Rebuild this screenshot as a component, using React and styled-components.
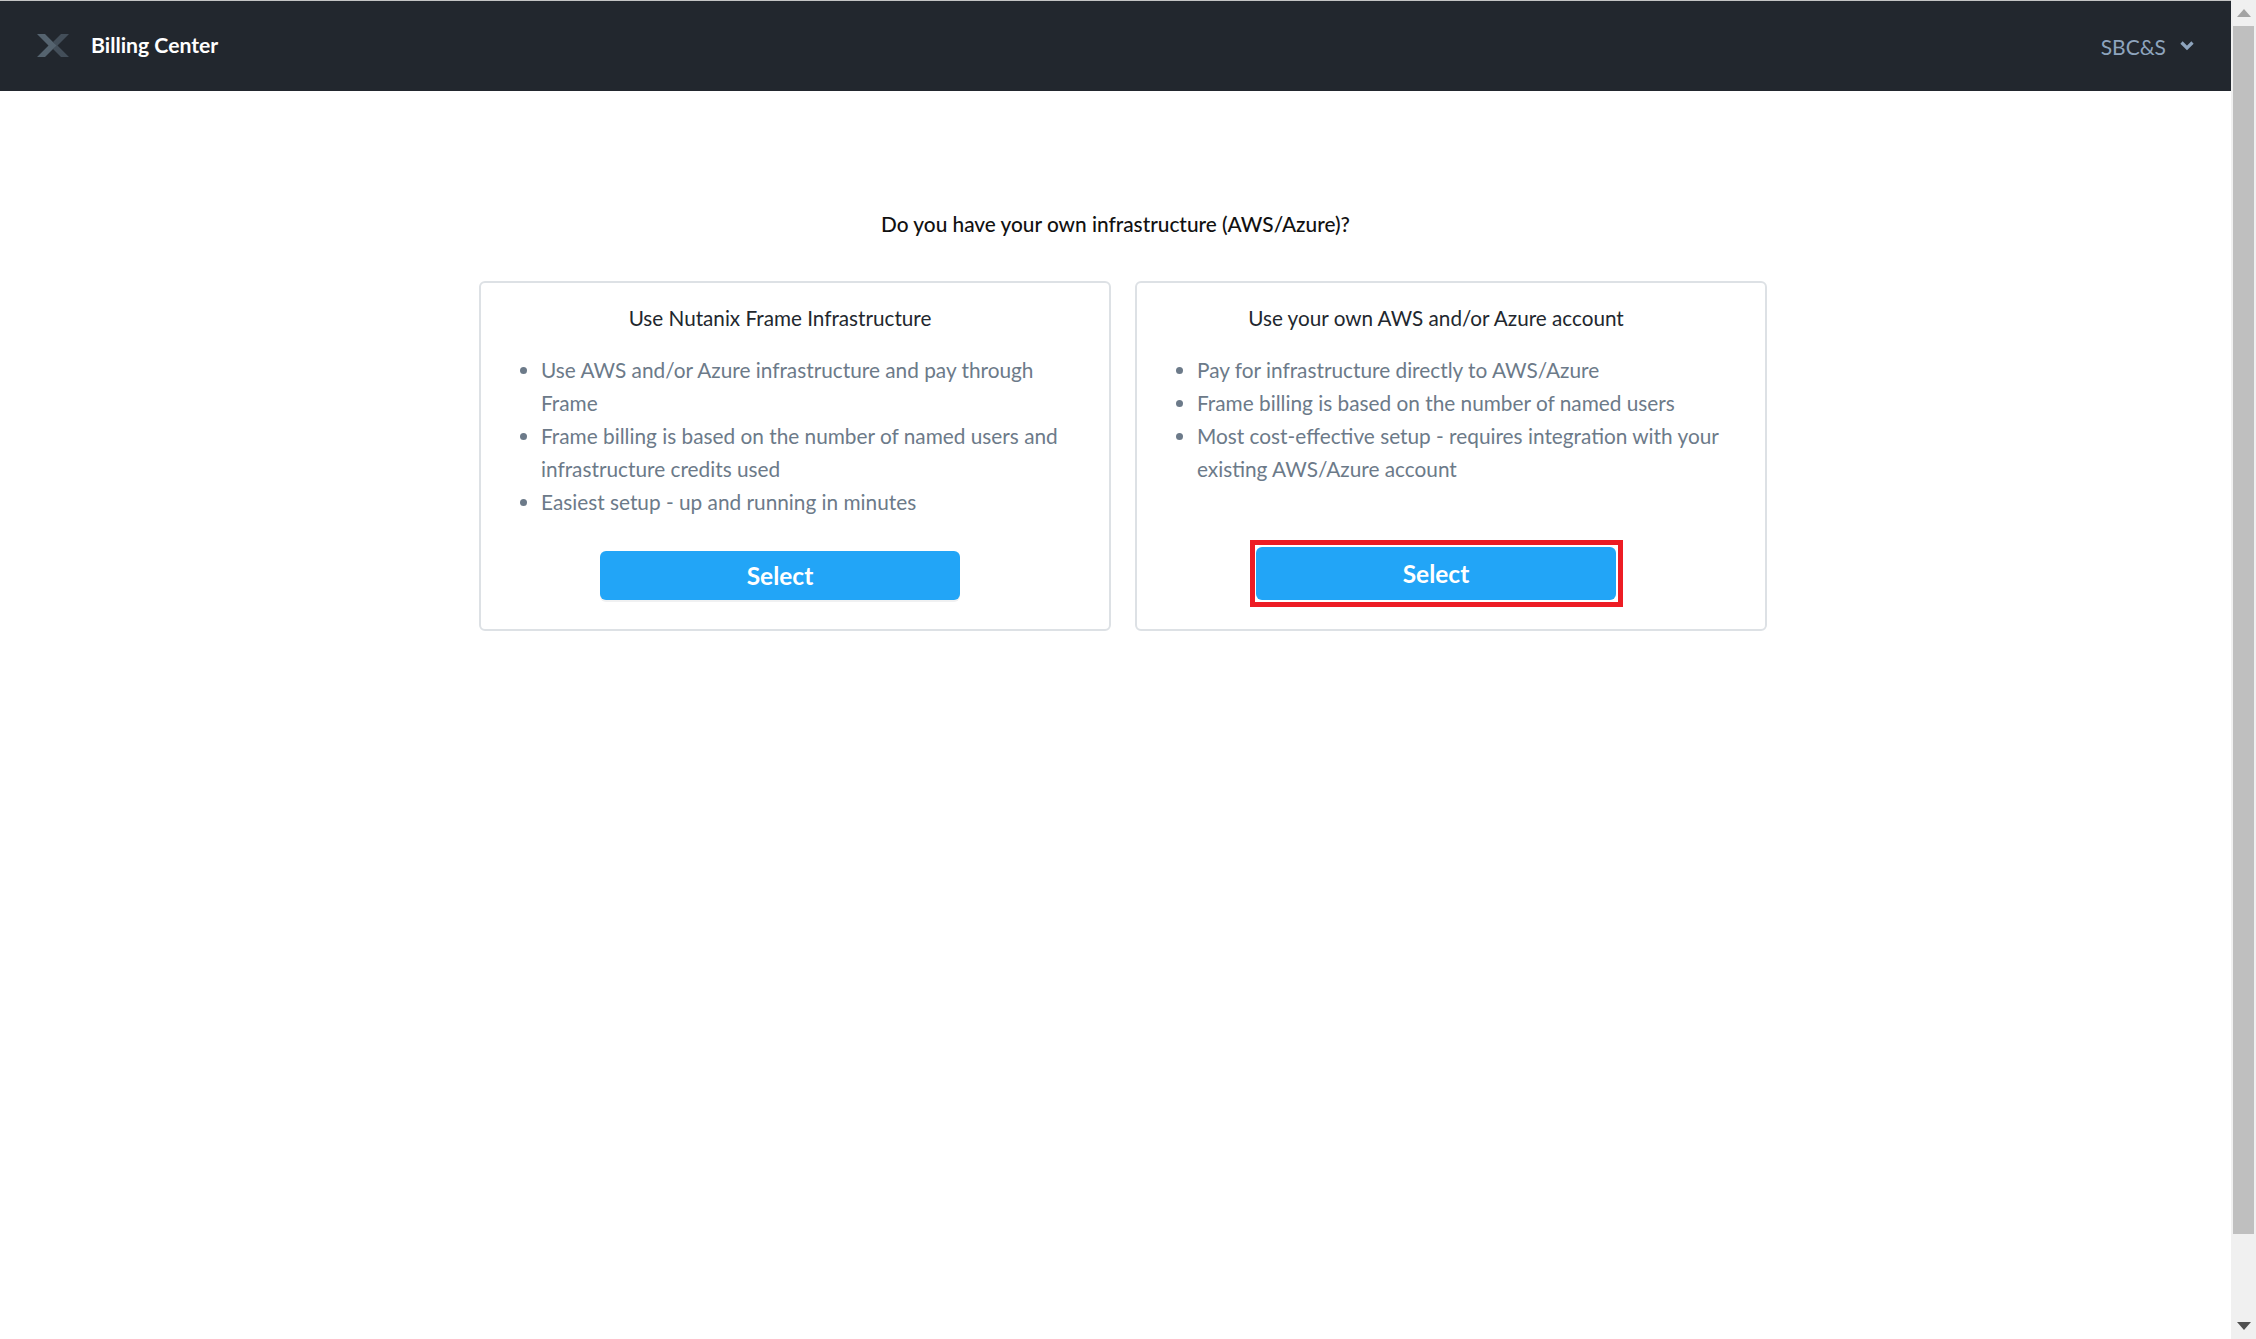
import styled, { createGlobalStyle } from "styled-components";

const GlobalStyle = createGlobalStyle`
  html, body {
    margin: 0;
    padding: 0;
    height: 100%;
    overflow: hidden;
    background: #fff;
  }
  body {
    font-family: Lato, "Open Sans", sans-serif;
  }
`;

const Page = styled.div`
  display: flex;
  height: 1339px;
`;

const Main = styled.div`
  flex: 1;
  min-width: 0;
`;

const Header = styled.header`
  height: 90px;
  border-top: 1px solid #c4c4c4;
  background: #22272e;
  display: flex;
  align-items: center;
  justify-content: space-between;
  padding: 0 37px 0 37px;
`;

const Brand = styled.div`
  display: flex;
  align-items: center;
  gap: 22px;
  padding-bottom: 2px;
`;

const BrandName = styled.span`
  color: #fff;
  font-size: 21.2px;
  font-weight: 700;
`;

const Account = styled.div`
  display: flex;
  align-items: center;
  gap: 14px;
  color: #8ea4bd;
  font-size: 21px;
`;

const Question = styled.h1`
  margin: 116px 0 0;
  font-size: 20.8px;
  line-height: 33px;
  font-weight: 500;
  color: #111;
  text-align: center;
`;

const Cards = styled.div`
  display: flex;
  gap: 24px;
  margin: 41px 0 0 479px;
`;

const Card = styled.section`
  width: 632px;
  height: 350px;
  box-sizing: border-box;
  border: 2px solid #dde1e5;
  border-radius: 6px;
  padding: 19px 60px 29px 30px;
  display: flex;
  flex-direction: column;
`;

const CardTitle = styled.h2`
  margin: 0;
  font-size: 20.7px;
  line-height: 33px;
  font-weight: 400;
  color: #22272e;
  text-align: center;
`;

const Points = styled.ul`
  margin: 18px -30px 0 0;
  padding: 0 0 0 30px;
  color: #6c7a89;
  font-size: 20.8px;
  line-height: 33px;

  li::marker {
    color: #6c7a89;
  }
`;

const Actions = styled.div`
  margin-top: auto;
  display: flex;
  justify-content: center;
`;

const Highlight = styled.div`
  border: 5px solid #ed1c24;
  padding: 2px 2px 2px 1px;
  margin: 0 -1px -7px 0;
  display: flex;
`;

const SelectButton = styled.button`
  width: 360px;
  height: ${(p) => p.$height}px;
  border: 0;
  border-radius: 6px;
  background: #22a5f7;
  color: #fff;
  font-family: inherit;
  font-size: 24.5px;
  font-weight: 700;
  box-shadow: ${(p) => (p.$raised ? "0 2px 0 #f0f1f2" : "none")};
`;

const Scrollbar = styled.div`
  width: 25px;
  background: #f0f0f0;
  display: flex;
  flex-direction: column;
  align-items: center;
`;

const ScrollArrow = styled.div`
  height: 26px;
  display: flex;
  align-items: center;
  justify-content: center;
  flex: none;
`;

const ScrollThumb = styled.div`
  width: 21px;
  height: 1208px;
  background: #bfbfbf;
`;

const ScrollTrack = styled.div`
  flex: 1;
`;

const Logo = () => (
  <svg width="32" height="23" viewBox="0 0 32 23">
    <path d="M24 0h8L20.500 11.500 32 23h-8l-8-8 2.800-3.500L16 8z" fill="#434e59" />
    <path d="M0 0h8l11.500 11.500L8 23H0l11.500-11.500z" fill="#55636f" />
  </svg>
);

const Chevron = () => (
  <svg width="14" height="10" viewBox="0 0 14 10">
    <path d="M1.500 1.500L7 7l5.500-5.500" fill="none" stroke="#8ea4bd" strokeWidth="3.2" />
  </svg>
);

const cards = [
  {
    title: "Use Nutanix Frame Infrastructure",
    points: [
      "Use AWS and/or Azure infrastructure and pay through Frame",
      "Frame billing is based on the number of named users and infrastructure credits used",
      "Easiest setup - up and running in minutes",
    ],
  },
  {
    title: "Use your own AWS and/or Azure account",
    points: [
      "Pay for infrastructure directly to AWS/Azure",
      "Frame billing is based on the number of named users",
      "Most cost-effective setup - requires integration with your existing AWS/Azure account",
    ],
    highlighted: true,
  },
];

const App = () => {
  return (
    <Page>
      <GlobalStyle />
      <Main>
        <Header>
          <Brand>
            <Logo />
            <BrandName>Billing Center</BrandName>
          </Brand>
          <Account>
            SBC&amp;S
            <Chevron />
          </Account>
        </Header>
        <Question>Do you have your own infrastructure (AWS/Azure)?</Question>
        <Cards>
          {cards.map((card) => (
            <Card key={card.title}>
              <CardTitle>{card.title}</CardTitle>
              <Points>
                {card.points.map((point) => (
                  <li key={point}>{point}</li>
                ))}
              </Points>
              <Actions>
                {card.highlighted ? (
                  <Highlight>
                    <SelectButton $height={53}>Select</SelectButton>
                  </Highlight>
                ) : (
                  <SelectButton $height={49} $raised>Select</SelectButton>
                )}
              </Actions>
            </Card>
          ))}
        </Cards>
      </Main>
      <Scrollbar>
        <ScrollArrow>
          <svg width="14" height="8" viewBox="0 0 14 8"><path d="M7 0l7 8H0z" fill="#a3a3a3" /></svg>
        </ScrollArrow>
        <ScrollThumb />
        <ScrollTrack />
        <ScrollArrow>
          <svg width="14" height="8" viewBox="0 0 14 8"><path d="M7 8L0 0h14z" fill="#505050" /></svg>
        </ScrollArrow>
      </Scrollbar>
    </Page>
  );
};

export default App;
